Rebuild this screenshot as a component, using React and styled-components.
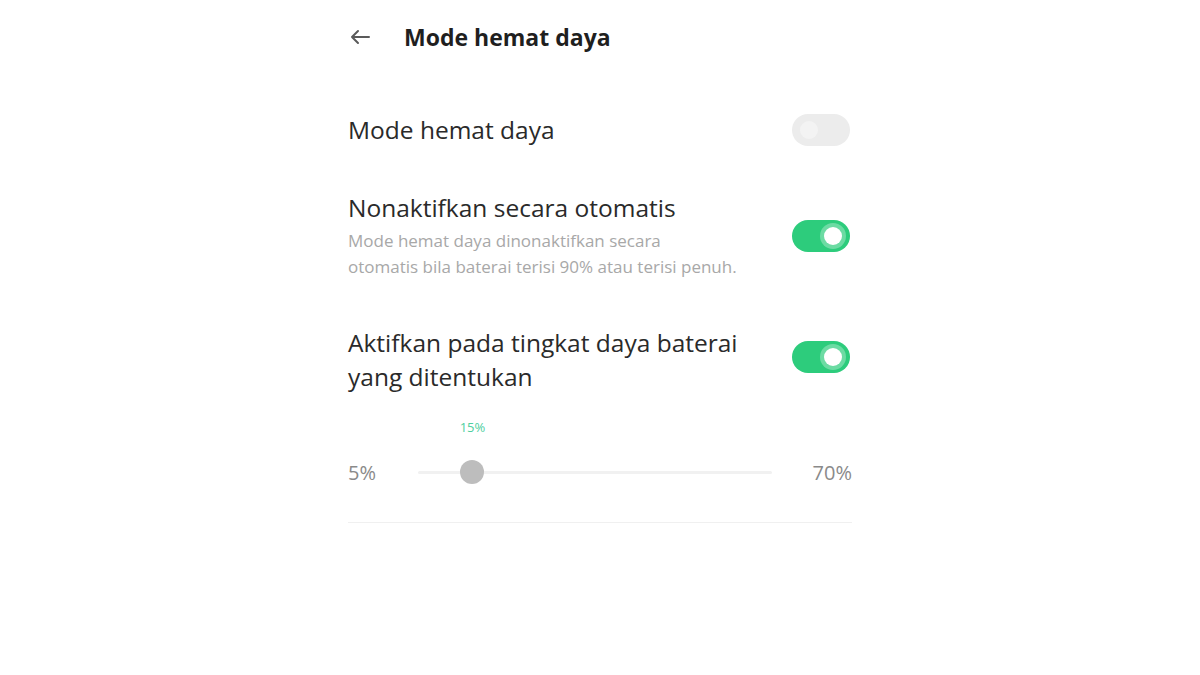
import React from "react";
import styled, { createGlobalStyle } from "styled-components";

const Global = createGlobalStyle`
  html, body { margin: 0; padding: 0; background: #ffffff; }
  body { font-family: "Open Sans", "Noto Sans", "Liberation Sans", sans-serif; color: #222; }
`;

const Page = styled.div`
  width: 504px;
  margin: 0 auto;
`;

const Header = styled.header`
  height: 74px;
  display: flex;
  align-items: center;
  gap: 32px;
`;

const BackButton = styled.button`
  width: 24px;
  height: 24px;
  padding: 0;
  border: none;
  background: none;
  display: flex;
  align-items: center;
  justify-content: center;
  color: #555;
`;

const Title = styled.h1`
  margin: 0;
  font-size: 23px;
  line-height: 30px;
  font-weight: 700;
  color: #1f1f1f;
`;

const List = styled.div`
  padding-top: 17px;
  display: flex;
  flex-direction: column;
`;

const Row = styled.div`
  display: flex;
  align-items: center;
  justify-content: space-between;
  gap: 20px;
  padding: 23px 0;
`;

const Texts = styled.div`
  display: flex;
  flex-direction: column;
  max-width: ${(p) => p.$max || "440px"};
`;

const RowTitle = styled.div`
  font-size: 24.5px;
  line-height: ${(p) => (p.$multi ? "34px" : "32px")};
  color: #2a2a2a;
`;

const RowDesc = styled.div`
  margin-top: 4px;
  font-size: 17px;
  line-height: 26px;
  color: #a8a8a8;
`;

const Toggle = styled.div`
  flex: none;
  width: 58px;
  height: 32px;
  border-radius: 16px;
  background: ${(p) => (p.$on ? "#2dcc7c" : "#ececec")};
  position: relative;
  margin-right: 2px;
  margin-bottom: ${(p) => p.$lift || "0"};
`;

const Knob = styled.span`
  position: absolute;
  top: 7px;
  ${(p) => (p.$on ? "right: 8px;" : "left: 8px;")}
  width: 18px;
  height: 18px;
  border-radius: 50%;
  background: ${(p) => (p.$on ? "#ffffff" : "#f3f3f3")};
  box-shadow: ${(p) => (p.$on ? "0 0 0 4px rgba(255,255,255,0.3)" : "none")};
`;

const SliderBlock = styled.div`
  display: flex;
  flex-direction: column;
`;

const ValueRow = styled.div`
  height: 20px;
  margin: 0 80px 0 70px;
  position: relative;
`;

const ValueLabel = styled.span`
  position: absolute;
  top: 0;
  transform: translateX(-50%);
  font-size: 13px;
  line-height: 20px;
  color: #4fcf9f;
`;

const SliderRow = styled.div`
  margin-top: 20px;
  height: 30px;
  display: flex;
  align-items: center;
`;

const EdgeLabel = styled.span`
  flex: none;
  width: ${(p) => p.$w};
  text-align: ${(p) => p.$align};
  font-size: 20px;
  color: #8a8a8a;
`;

const Track = styled.div`
  flex: 1;
  height: 3px;
  border-radius: 2px;
  background: #f1f1f1;
  position: relative;
  margin: 0 ${(p) => p.$right} 0 ${(p) => p.$left};
`;

const Thumb = styled.span`
  position: absolute;
  top: 50%;
  width: 24px;
  height: 24px;
  border-radius: 50%;
  background: #bdbdbd;
  transform: translate(-50%, -50%);
`;

const Divider = styled.hr`
  margin: 35px 0 0;
  border: none;
  height: 1px;
  background: #f0f0f0;
`;

const ArrowIcon = () => (
  <svg width="22" height="18" viewBox="0 0 22 18" fill="none">
    <path d="M20 9H3M9 3L3 9l6 6" stroke="#5a5a5a" strokeWidth="2" strokeLinecap="round" strokeLinejoin="round" />
  </svg>
);

export default function App() {
  const min = 5;
  const max = 70;
  const value = 15;
  const pct = ((value - min) / (max - min)) * 100;
  return (
    <>
      <Global />
      <Page>
        <Header>
          <BackButton aria-label="Kembali">
            <ArrowIcon />
          </BackButton>
          <Title>Mode hemat daya</Title>
        </Header>
        <List>
          <Row>
            <Texts>
              <RowTitle>Mode hemat daya</RowTitle>
            </Texts>
            <Toggle>
              <Knob />
            </Toggle>
          </Row>
          <Row>
            <Texts>
              <RowTitle>Nonaktifkan secara otomatis</RowTitle>
              <RowDesc>
                Mode hemat daya dinonaktifkan secara
                <br />
                otomatis bila baterai terisi 90% atau terisi penuh.
              </RowDesc>
            </Texts>
            <Toggle $on>
              <Knob $on />
            </Toggle>
          </Row>
          <Row>
            <Texts $max="420px">
              <RowTitle $multi>Aktifkan pada tingkat daya baterai yang ditentukan</RowTitle>
            </Texts>
            <Toggle $on $lift="6px">
              <Knob $on />
            </Toggle>
          </Row>
          <SliderBlock>
            <ValueRow>
              <ValueLabel style={{ left: `${pct}%` }}>{value}%</ValueLabel>
            </ValueRow>
            <SliderRow>
              <EdgeLabel $w="32px" $align="left">5%</EdgeLabel>
              <Track $left="38px" $right="36px">
                <Thumb style={{ left: `${pct}%` }} />
              </Track>
              <EdgeLabel $w="44px" $align="right">70%</EdgeLabel>
            </SliderRow>
          </SliderBlock>
          <Divider />
        </List>
      </Page>
    </>
  );
}
